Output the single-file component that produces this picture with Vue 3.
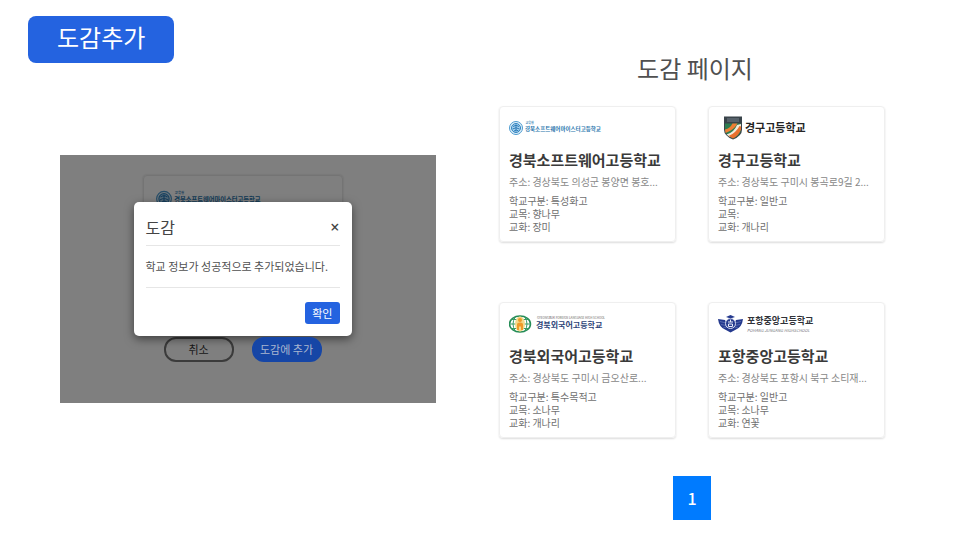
<script setup>
import { h } from 'vue'

const schools = [
  { id: 'software', name: '경북소프트웨어고등학교', address: '경상북도 의성군 봉양면 봉호...', kind: '특성화고', tree: '향나무', flower: '장미' },
  { id: 'gyeonggu', name: '경구고등학교', address: '경상북도 구미시 봉곡로9길 2...', kind: '일반고', tree: '', flower: '개나리' },
  { id: 'foreign', name: '경북외국어고등학교', address: '경상북도 구미시 금오산로...', kind: '특수목적고', tree: '소나무', flower: '개나리' },
  { id: 'pohang', name: '포항중앙고등학교', address: '경상북도 포항시 북구 소티재...', kind: '일반고', tree: '소나무', flower: '연꽃' }
]

const family = "'Noto Sans CJK KR', sans-serif"
const text = (x, y, size, fill, content, extra = {}) =>
  h('text', { x, y, 'font-size': size, fill, 'font-family': family, 'font-weight': 700, ...extra }, content)
const path = (d, attrs) => h('path', { d, ...attrs })

// School emblems with their wordmarks, drawn on a 200 x 52 board.
const marks = {
  software: () => [
    h('circle', { cx: 14, cy: 26, r: 13, fill: '#e3f1fa', stroke: '#4d9bd0', 'stroke-width': 2 }),
    h('circle', { cx: 14, cy: 26, r: 9, fill: '#a9d3ee', stroke: '#2f83c0', 'stroke-width': 2 }),
    path('M8 23q6-5 12 0M7 28q7-5 14 0M10 32q5-4 9 0M14 19v14', { fill: 'none', stroke: '#2b7ab8', 'stroke-width': 2 }),
    text(33, 18, 6, '#4285b5', '교육청'),
    text(32, 31, 11, '#2876ad', '경북소프트웨어마이스터고등학교')
  ],
  gyeonggu: () => [
    path('M12 3h36v26q0 13-18 20Q12 42 12 29Z', { fill: '#39434a' }),
    path('M14 17h32v12q0 11-16 18-16-7-16-18Z', { fill: '#2d7d50' }),
    path('M14 29q10-2 15-12h10Q31 31 15 36Z', { fill: '#ee7e35' }),
    path('M17 39q15-4 21-19l8-2v8Q39 40 24 44Z', { fill: '#f2eadb' }),
    path('M21 42q14-5 22-20l3 1v6q-4 12-16 18Z', { fill: '#e8702e' }),
    path('M18 8h24M18 12h24', { stroke: '#74808a', 'stroke-width': 2, fill: 'none' }),
    text(54, 34, 22, '#252525', '경구고등학교')
  ],
  foreign: () => [
    h('ellipse', { cx: 22, cy: 26, rx: 21, ry: 16, fill: '#fff', stroke: '#238b55', 'stroke-width': 3 }),
    path('M1 26h42M5 17h34M5 35h34M13 11q-10 15 0 30M31 11q10 15 0 30', { fill: 'none', stroke: '#3a9a65', 'stroke-width': 2 }),
    h('ellipse', { cx: 22, cy: 26, rx: 10, ry: 15, fill: '#f3d98c' }),
    h('circle', { cx: 22, cy: 18, r: 4, fill: '#f09a29' }),
    path('M16 38V27q0-4 6-4t6 4v11h-4v-7h-4v7Z', { fill: '#f09a29' }),
    text(56, 16, 6, '#66615c', 'GYEONGBUK FOREIGN LANGUAGE HIGH SCHOOL', { 'font-weight': 400 }),
    text(54, 33, 16, '#2c4377', '경북외국어고등학교')
  ],
  pohang: () => [
    path('M0 16l14 2 4 8h14l4-8 14-2q-2 16-14 21l-11 6-11-6Q2 32 0 16Z', { fill: '#253a8e' }),
    path('M4 21l12 3M6 27l10 2M11 33l7-1M46 21l-12 3M44 27l-10 2M39 33l-7-1', { stroke: '#8d9ad0', 'stroke-width': 1, fill: 'none' }),
    h('circle', { cx: 25, cy: 25, r: 10, fill: '#253a8e', stroke: '#d7dcf0', 'stroke-width': 2 }),
    path('M20 22h10M25 17v5M21 26h8v5h-8Z', { stroke: '#e8ebf7', 'stroke-width': 2, fill: 'none' }),
    path('M16 12l9-4 9 4-9 3Z', { fill: '#253a8e' }),
    text(58, 26, 18, '#303238', '포항중앙고등학교'),
    text(58, 42, 8, '#77777c', 'POHANG JUNGANG HIGHSCHOOL', { 'font-style': 'italic', 'font-weight': 400 })
  ]
}

const SchoolLogo = (props) =>
  h('svg', { viewBox: '0 0 200 52', role: 'img', 'aria-label': props.label }, marks[props.mark]())
SchoolLogo.props = ['mark', 'label']
</script>

<template>
  <main class="page">
    <section class="pane add-pane">
      <button type="button" class="add-button">도감추가</button>

      <div class="preview">
        <div class="preview-card">
          <SchoolLogo class="preview-logo" mark="software" label="경북소프트웨어마이스터고등학교" />
        </div>
        <div class="preview-actions">
          <button type="button" class="pill">취소</button>
          <button type="button" class="pill primary">도감에 추가</button>
        </div>

        <div class="overlay">
          <div class="dialog" role="dialog" aria-labelledby="dialog-title">
            <header class="dialog-head">
              <h2 id="dialog-title">도감</h2>
              <button type="button" class="close">×</button>
            </header>
            <p class="dialog-body">학교 정보가 성공적으로 추가되었습니다.</p>
            <footer class="dialog-foot">
              <button type="button" class="confirm">확인</button>
            </footer>
          </div>
        </div>
      </div>
    </section>

    <section class="pane list-pane">
      <h1>도감 페이지</h1>
      <div class="cards">
        <article v-for="school in schools" :key="school.id" class="card">
          <SchoolLogo class="logo" :mark="school.id" :label="school.name" />
          <h2>{{ school.name }}</h2>
          <p class="address">주소: {{ school.address }}</p>
          <ul class="facts">
            <li>학교구분: {{ school.kind }}</li>
            <li>교목: {{ school.tree }}</li>
            <li>교화: {{ school.flower }}</li>
          </ul>
        </article>
      </div>
      <nav class="pages">
        <a href="#1" class="page-link">1</a>
      </nav>
    </section>
  </main>
</template>

<style>
body {
  margin: 0;
  background: #fff;
}
</style>

<style scoped>
.page {
  display: grid;
  grid-template-columns: 1fr 1fr;
  min-height: 100vh;
  color: #505050;
  font-family: 'Noto Sans CJK KR', sans-serif;
}

h1, h2, p, ul {
  margin: 0;
  padding: 0;
}

button {
  font-family: inherit;
  cursor: pointer;
}

.pane {
  box-sizing: border-box;
  display: flex;
  flex-direction: column;
}

.add-pane {
  padding: 16px 44px 16px 28px;
}

.add-button {
  align-self: flex-start;
  padding: 3px 29px 8px;
  border: 0;
  border-radius: 8px;
  background: #2463e0;
  color: #fff;
  font-size: 24px;
  line-height: 36px;
}

.preview {
  position: relative;
  display: flex;
  flex-direction: column;
  align-items: center;
  margin: 92px 0 0 32px;
  padding: 20px 11px 41px 0;
  background: #fff;
}

.preview-card {
  box-sizing: border-box;
  width: 200px;
  min-height: 148px;
  padding: 8px 12px;
  border: 1px solid #e8e8e8;
  border-radius: 4px;
  box-shadow: 0 0 2px #ccc;
}

.preview-logo {
  display: block;
  width: 114px;
}

.preview-actions {
  display: flex;
  gap: 18px;
  margin-top: 14px;
}

.pill {
  box-sizing: border-box;
  width: 70px;
  padding: 0;
  border: 2px solid #777;
  border-radius: 12px;
  background: #fff;
  color: #333;
  font-size: 11px;
  line-height: 21px;
  white-space: nowrap;
}

.pill.primary {
  z-index: 1;
  border-color: #1646a6;
  background: #1646a6;
  color: #a9b6d0;
}

.overlay {
  position: absolute;
  inset: 0;
  display: flex;
  align-items: flex-start;
  justify-content: center;
  padding: 47px 11px 0 0;
  background: rgba(0, 0, 0, 0.5);
}

.dialog {
  box-sizing: border-box;
  width: 218px;
  padding: 12px;
  border-radius: 5px;
  background: #fff;
  box-shadow: 0 3px 10px rgba(0, 0, 0, 0.5);
}

.dialog-head {
  display: flex;
  align-items: center;
  justify-content: space-between;
  padding-bottom: 5px;
  border-bottom: 1px solid #e6e6e6;
}

.dialog-head h2 {
  color: #444;
  font-size: 16px;
  font-weight: 400;
  line-height: 26px;
}

.close {
  padding: 0;
  border: 0;
  background: none;
  color: #444;
  font-family: 'Noto Sans', sans-serif;
  font-size: 16px;
  font-weight: 500;
  line-height: 20px;
}

.dialog-body {
  padding: 10px 0 11px;
  border-bottom: 1px solid #e6e6e6;
  font-size: 11px;
  line-height: 20px;
}

.dialog-foot {
  display: flex;
  justify-content: flex-end;
  padding-top: 14px;
}

.confirm {
  padding: 0 7px;
  border: 0;
  border-radius: 3px;
  background: #2463e0;
  color: #fff;
  font-size: 11px;
  line-height: 22px;
}

.list-pane {
  align-items: center;
  padding: 50px 75px 20px 19px;
}

h1 {
  padding-left: 6px;
  font-size: 24px;
  font-weight: 400;
  line-height: 36px;
}

.cards {
  display: grid;
  grid-template-columns: 1fr 1fr;
  gap: 60px 32px;
  width: 100%;
  margin-top: 20px;
}

.card {
  min-width: 0;
  padding: 8px 9px;
  border: 1px solid #efefef;
  border-radius: 4px;
  box-shadow: 0 1px 2px rgba(0, 0, 0, 0.14);
}

.logo {
  display: block;
  width: 100px;
  height: 26px;
}

.card h2 {
  margin-top: 9px;
  color: #3a3a3a;
  font-size: 15px;
  font-weight: 700;
  line-height: 20px;
  white-space: nowrap;
}

.address {
  margin-top: 4px;
  color: #888;
  font-size: 10px;
  line-height: 16px;
  white-space: nowrap;
}

.facts {
  margin-top: 4px;
  color: #707070;
  font-size: 10px;
  line-height: 13px;
  list-style: none;
}

.pages {
  display: flex;
  margin-top: 38px;
}

.page-link {
  padding: 0 14px;
  background: #007bff;
  color: #fff;
  font-size: 16px;
  font-weight: 500;
  line-height: 44px;
  text-decoration: none;
}
</style>
